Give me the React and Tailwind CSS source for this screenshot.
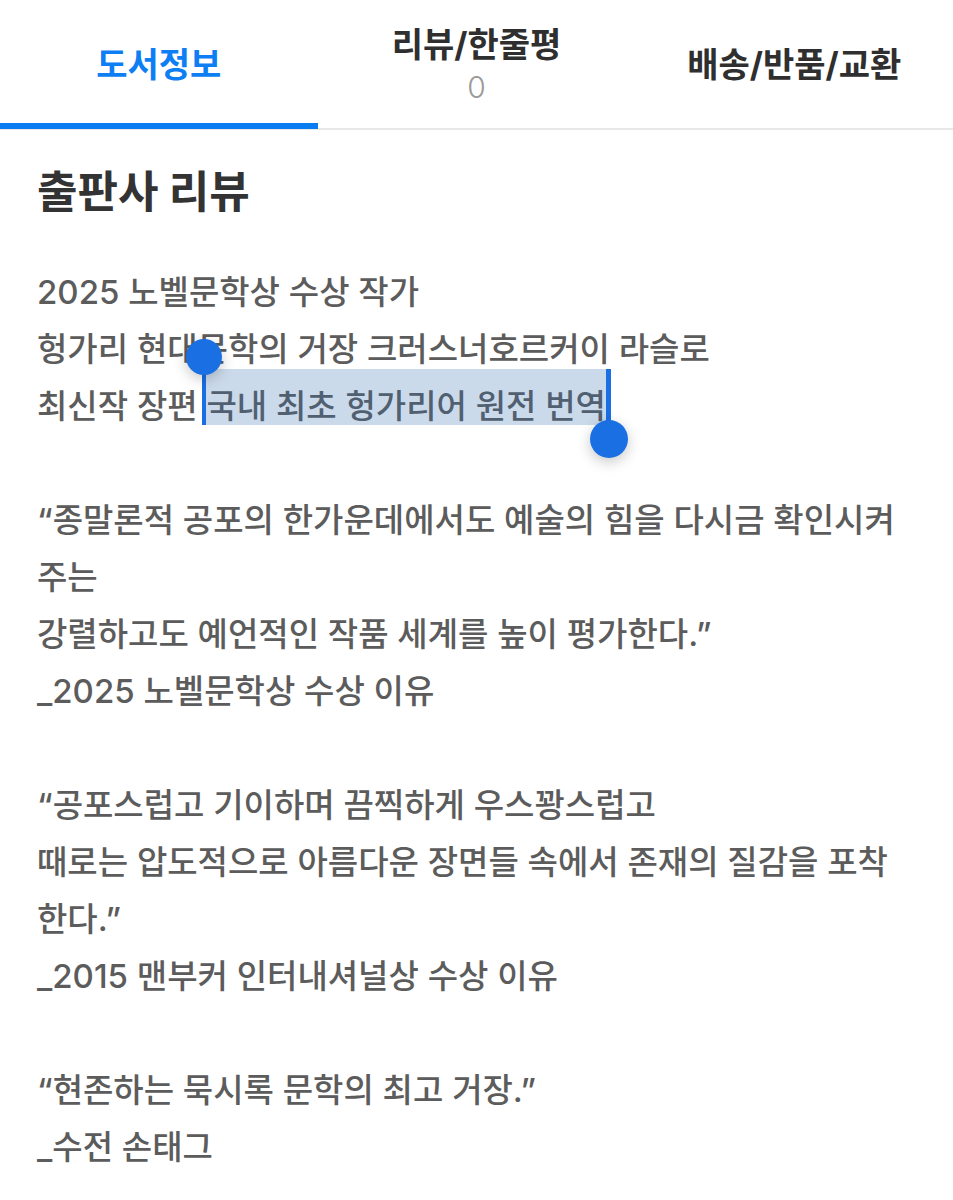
export default function App() {
  const font = { fontFamily: 'Inter, "Noto Sans CJK KR", sans-serif' };

  const Line = ({ children }) => (
    <div className="h-[57px] leading-[57px] whitespace-nowrap">{children}</div>
  );

  return (
    <div className="w-[953px] min-h-[1200px] bg-white" style={font}>
      {/* tabs */}
      <div className="flex h-[130px] border-b-2 border-[#e8e8e8]">
        <div className="relative flex-1 flex items-center justify-center">
          <span className="text-[34px] font-bold text-[#0d7ef3]">도서정보</span>
          <div className="absolute left-0 right-0 bottom-[-1px] h-[6px] bg-[#0a7cf2]" />
        </div>
        <div className="flex-1 flex flex-col items-center justify-center pt-[4px]">
          <span className="text-[34px] font-bold text-[#2f2f2f] leading-[43px]">리뷰/한줄평</span>
          <span className="text-[30px] font-light text-[#9a9a9a] leading-[43px]">0</span>
        </div>
        <div className="flex-1 flex items-center justify-center">
          <span className="text-[34px] font-bold text-[#2f2f2f]">배송/반품/교환</span>
        </div>
      </div>

      <div className="px-[37px]">
        <h2 className="pt-[34px] h-[90px] leading-[56px] text-[44px] font-bold text-[#333333]">
          출판사 리뷰
        </h2>

        <div className="mt-[44px] text-[33px] font-medium text-[#5c5c5c]">
          <Line>2025 노벨문학상 수상 작가</Line>
          <Line>헝가리 현대문학의 거장 크러스너호르커이 라슬로</Line>
          <Line>
            최신작 장편{' '}
            <span className="relative">
              국내 최초 헝가리어 원전 번역
              <span className="absolute left-0 right-0 top-[-17px] h-[56px] bg-[rgba(47,107,175,0.25)]" />
              {/* left handle */}
              <span className="absolute left-[-4px] top-[-31px] w-[4px] h-[70px] bg-[#1a6fe3]" />
              <span className="absolute left-[-20px] top-[-47px] w-[36px] h-[36px] rounded-full bg-[#1a6fe3] shadow-[0_4px_14px_rgba(0,0,0,0.22)]" />
              {/* right handle */}
              <span className="absolute right-[-5px] top-[-17px] w-[5px] h-[68px] bg-[#1a6fe3]" />
              <span className="absolute right-[-22px] top-[34px] w-[38px] h-[38px] rounded-full bg-[#1a6fe3] shadow-[0_4px_14px_rgba(0,0,0,0.22)]" />
            </span>
          </Line>
          <Line />
          <Line>“종말론적 공포의 한가운데에서도 예술의 힘을 다시금 확인시켜</Line>
          <Line>주는</Line>
          <Line>강렬하고도 예언적인 작품 세계를 높이 평가한다.”</Line>
          <Line>_2025 노벨문학상 수상 이유</Line>
          <Line />
          <Line>“공포스럽고 기이하며 끔찍하게 우스꽝스럽고</Line>
          <Line>때로는 압도적으로 아름다운 장면들 속에서 존재의 질감을 포착</Line>
          <Line>한다.”</Line>
          <Line>_2015 맨부커 인터내셔널상 수상 이유</Line>
          <Line />
          <Line>“현존하는 묵시록 문학의 최고 거장.”</Line>
          <Line>_수전 손태그</Line>
        </div>
      </div>
    </div>
  );
}
